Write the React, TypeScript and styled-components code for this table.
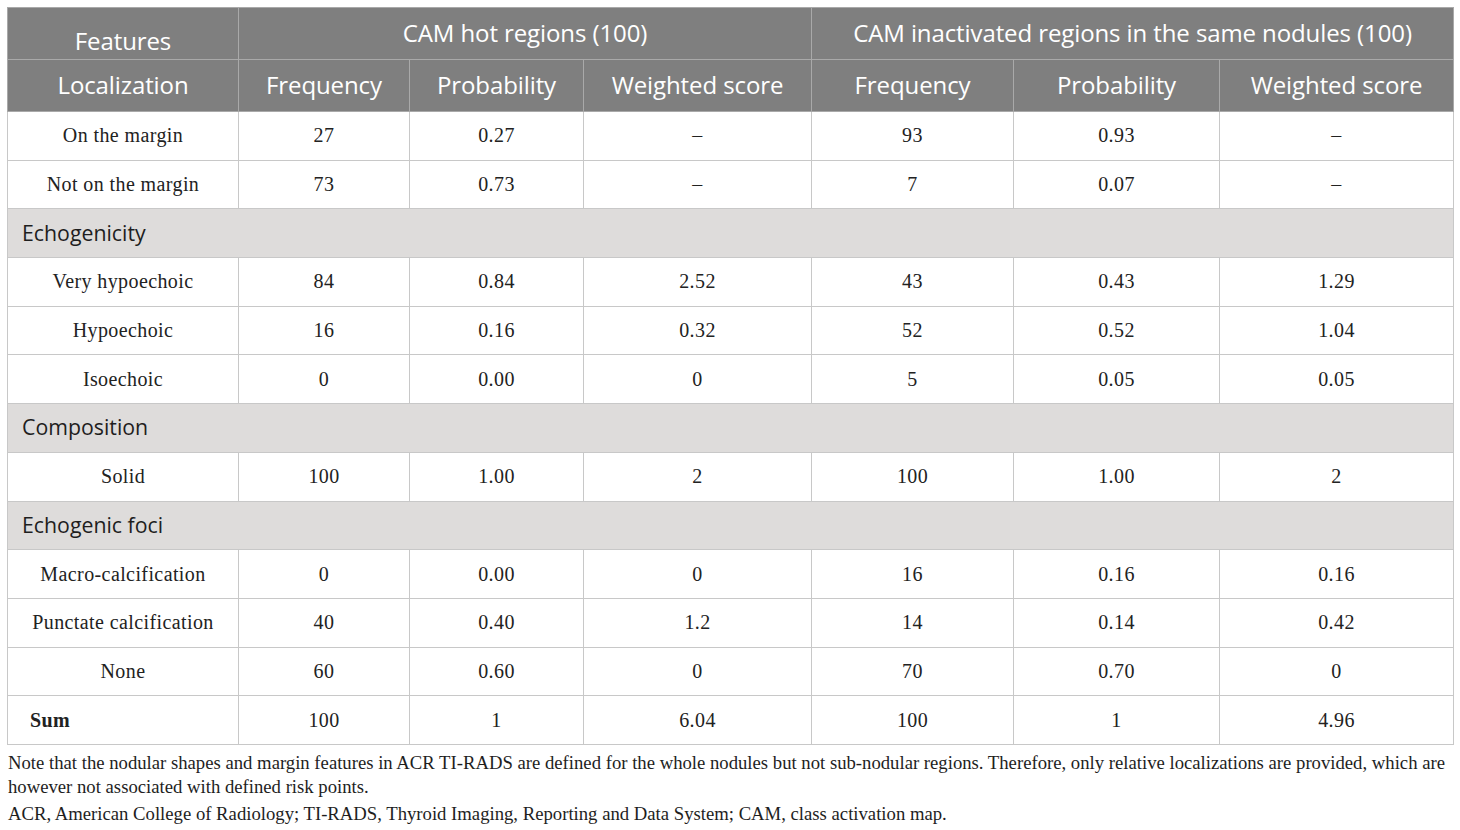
import React from 'react';
import styled, { createGlobalStyle } from 'styled-components';

const GlobalStyle = createGlobalStyle`
    html, body {
        margin: 0;
        padding: 0;
        background: #fff;
    }
`

const Page = styled.div`
    padding: 7px 8px 0 7px;
    width: 1445px;
`

const Table = styled.table`
    width: 1446px;
    table-layout: fixed;
    border-collapse: collapse;
`

// Header cells (grey bar with white sans text)
const Head = styled.th<{ $low?: boolean }>`
    background-color: #7f7f7f;
    color: #fff;
    font-family: "Open Sans", sans-serif;
    font-weight: 400;
    font-size: 24px;
    letter-spacing: -0.1px;
    border: 1px solid #a9a9a9;
    height: ${p => (p.$low ? '36px' : '50px')};
    padding: ${p => (p.$low ? '14px 0 0' : '0 0 1px')};
    line-height: 30px;
    text-align: center;
    vertical-align: middle;
`

// Body cells (serif numbers)
const Cell = styled.td<{ $bold?: boolean; $left?: boolean }>`
    font-family: "Liberation Serif", serif;
    font-size: 20px;
    letter-spacing: 0.4px;
    color: #222;
    font-weight: ${p => (p.$bold ? 700 : 400)};
    text-align: ${p => (p.$left ? 'left' : 'center')};
    padding: ${p => (p.$left ? '0 0 0 22px' : '0')};
    border: 1px solid #c8c8c8;
    height: 47.7px;
`

// Section heading rows
const Section = styled.td`
    background-color: #dedcdb;
    font-family: "Open Sans", sans-serif;
    font-size: 21.3px;
    color: #1e1e1e;
    border: 1px solid #c8c8c8;
    padding: 0 0 2px 14px;
    height: 45.7px;
`

const Notes = styled.div`
    font-family: "Liberation Serif", serif;
    font-size: 18.7px;
    color: #1e1e1e;
    line-height: 24px;
    padding: 6px 0 0 1px;
`

const Abbrev = styled.div`
    margin-top: 3px;
`

const widths = [231, 171, 174, 228, 202, 206, 234];

type Row = { label: string; cells: string[]; bold?: boolean } | { section: string };

const rows: Row[] = [
    { label: 'On the margin', cells: ['27', '0.27', '–', '93', '0.93', '–'] },
    { label: 'Not on the margin', cells: ['73', '0.73', '–', '7', '0.07', '–'] },
    { section: 'Echogenicity' },
    { label: 'Very hypoechoic', cells: ['84', '0.84', '2.52', '43', '0.43', '1.29'] },
    { label: 'Hypoechoic', cells: ['16', '0.16', '0.32', '52', '0.52', '1.04'] },
    { label: 'Isoechoic', cells: ['0', '0.00', '0', '5', '0.05', '0.05'] },
    { section: 'Composition' },
    { label: 'Solid', cells: ['100', '1.00', '2', '100', '1.00', '2'] },
    { section: 'Echogenic foci' },
    { label: 'Macro-calcification', cells: ['0', '0.00', '0', '16', '0.16', '0.16'] },
    { label: 'Punctate calcification', cells: ['40', '0.40', '1.2', '14', '0.14', '0.42'] },
    { label: 'None', cells: ['60', '0.60', '0', '70', '0.70', '0'] },
    { label: 'Sum', cells: ['100', '1', '6.04', '100', '1', '4.96'], bold: true },
];

const App = () => {
    return (
        <Page>
            <GlobalStyle />
            <Table>
                <colgroup>
                    {widths.map((w, i) => <col key={i} style={{ width: w }} />)}
                </colgroup>
                <thead>
                    <tr>
                        <Head $low>Features</Head>
                        <Head colSpan={3}>CAM hot regions (100)</Head>
                        <Head colSpan={3}>CAM inactivated regions in the same nodules (100)</Head>
                    </tr>
                    <tr>
                        <Head>Localization</Head>
                        <Head>Frequency</Head>
                        <Head>Probability</Head>
                        <Head>Weighted score</Head>
                        <Head>Frequency</Head>
                        <Head>Probability</Head>
                        <Head>Weighted score</Head>
                    </tr>
                </thead>
                <tbody>
                    {rows.map((r, i) =>
                        'section' in r ? (
                            <tr key={i}>
                                <Section colSpan={7}>{r.section}</Section>
                            </tr>
                        ) : (
                            <tr key={i}>
                                <Cell $bold={r.bold} $left={r.bold}>{r.label}</Cell>
                                {r.cells.map((c, j) => <Cell key={j}>{c}</Cell>)}
                            </tr>
                        )
                    )}
                </tbody>
            </Table>
            <Notes>
                Note that the nodular shapes and margin features in ACR TI-RADS are defined for the whole nodules but not sub-nodular regions. Therefore, only relative localizations are provided, which are however not associated with defined risk points.
                <Abbrev>ACR, American College of Radiology; TI-RADS, Thyroid Imaging, Reporting and Data System; CAM, class activation map.</Abbrev>
            </Notes>
        </Page>
    );
}

export default App;
